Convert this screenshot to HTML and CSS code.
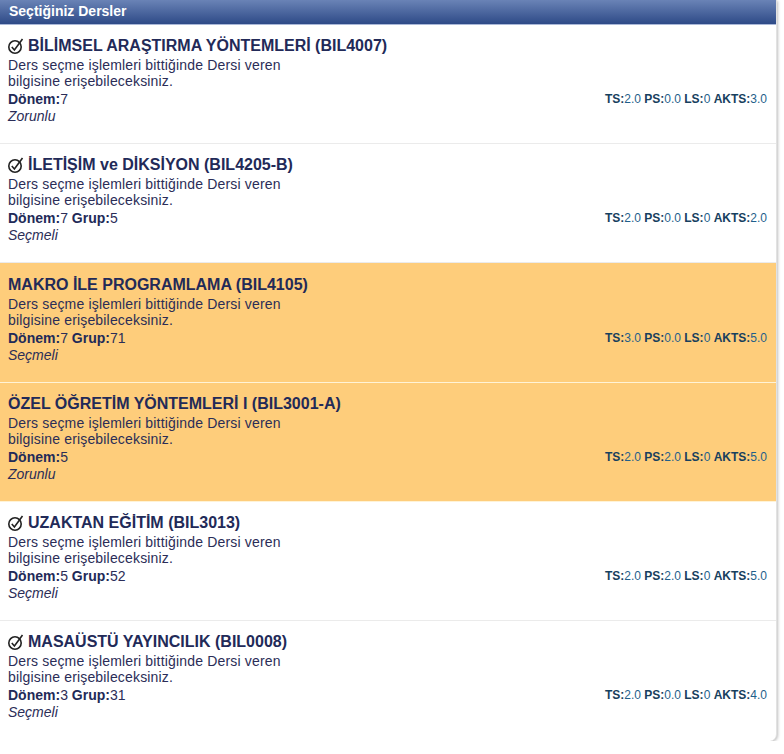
FILE: index.html
```html
<!DOCTYPE html>
<html lang="tr">
<head>
<meta charset="utf-8">
<title>Seçtiğiniz Dersler</title>
<link rel="stylesheet" href="styles.css">
</head>
<body>
<div class="panel">
  <div class="panel-head">Seçtiğiniz Dersler</div>
  <ul class="list">
    <li class="item">
      <div class="title"><svg class="chk" viewBox="0 0 16 16"><circle cx="7" cy="9" r="6.2"/><path d="M3.8 9 L6.4 12 L14.5 1"/></svg>BİLİMSEL ARAŞTIRMA YÖNTEMLERİ (BIL4007)</div>
      <div class="desc">Ders seçme işlemleri bittiğinde Dersi veren<br>bilgisine erişebileceksiniz.</div>
      <div class="row"><span><b>Dönem:</b>7</span><span class="cr"><b>TS:</b>2.0 <b>PS:</b>0.0 <b>LS:</b>0 <b>AKTS:</b>3.0</span></div>
      <div class="type">Zorunlu</div>
    </li>
    <li class="item">
      <div class="title"><svg class="chk" viewBox="0 0 16 16"><circle cx="7" cy="9" r="6.2"/><path d="M3.8 9 L6.4 12 L14.5 1"/></svg>İLETİŞİM ve DİKSİYON (BIL4205-B)</div>
      <div class="desc">Ders seçme işlemleri bittiğinde Dersi veren<br>bilgisine erişebileceksiniz.</div>
      <div class="row"><span><b>Dönem:</b>7 <b>Grup:</b>5</span><span class="cr"><b>TS:</b>2.0 <b>PS:</b>0.0 <b>LS:</b>0 <b>AKTS:</b>2.0</span></div>
      <div class="type">Seçmeli</div>
    </li>
    <li class="item warn">
      <div class="title">MAKRO İLE PROGRAMLAMA (BIL4105)</div>
      <div class="desc">Ders seçme işlemleri bittiğinde Dersi veren<br>bilgisine erişebileceksiniz.</div>
      <div class="row"><span><b>Dönem:</b>7 <b>Grup:</b>71</span><span class="cr"><b>TS:</b>3.0 <b>PS:</b>0.0 <b>LS:</b>0 <b>AKTS:</b>5.0</span></div>
      <div class="type">Seçmeli</div>
    </li>
    <li class="item warn">
      <div class="title">ÖZEL ÖĞRETİM YÖNTEMLERİ I (BIL3001-A)</div>
      <div class="desc">Ders seçme işlemleri bittiğinde Dersi veren<br>bilgisine erişebileceksiniz.</div>
      <div class="row"><span><b>Dönem:</b>5</span><span class="cr"><b>TS:</b>2.0 <b>PS:</b>2.0 <b>LS:</b>0 <b>AKTS:</b>5.0</span></div>
      <div class="type">Zorunlu</div>
    </li>
    <li class="item">
      <div class="title"><svg class="chk" viewBox="0 0 16 16"><circle cx="7" cy="9" r="6.2"/><path d="M3.8 9 L6.4 12 L14.5 1"/></svg>UZAKTAN EĞİTİM (BIL3013)</div>
      <div class="desc">Ders seçme işlemleri bittiğinde Dersi veren<br>bilgisine erişebileceksiniz.</div>
      <div class="row"><span><b>Dönem:</b>5 <b>Grup:</b>52</span><span class="cr"><b>TS:</b>2.0 <b>PS:</b>2.0 <b>LS:</b>0 <b>AKTS:</b>5.0</span></div>
      <div class="type">Seçmeli</div>
    </li>
    <li class="item">
      <div class="title"><svg class="chk" viewBox="0 0 16 16"><circle cx="7" cy="9" r="6.2"/><path d="M3.8 9 L6.4 12 L14.5 1"/></svg>MASAÜSTÜ YAYINCILIK (BIL0008)</div>
      <div class="desc">Ders seçme işlemleri bittiğinde Dersi veren<br>bilgisine erişebileceksiniz.</div>
      <div class="row"><span><b>Dönem:</b>3 <b>Grup:</b>31</span><span class="cr"><b>TS:</b>2.0 <b>PS:</b>0.0 <b>LS:</b>0 <b>AKTS:</b>4.0</span></div>
      <div class="type">Seçmeli</div>
    </li>
  </ul>
</div>
</body>
</html>
```
FILE: styles.css
```css
html, body {
  margin: 0;
  padding: 0;
  background: #fff;
}
body {
  font-family: "Liberation Sans", Arial, sans-serif;
  color: #2b2d57;
}
.panel {
  width: 777px;
  background: #fff;
  border-radius: 0 0 7px 0;
  box-shadow: 1px 1px 3px rgba(0,0,0,0.25);
  border-right: 1px solid #e2e2e2;
  box-sizing: border-box;
  padding-bottom: 2px;
}
.panel-head {
  height: 24px;
  border-bottom: 1px solid #aab8d8;
  background: linear-gradient(#6a83b6, #2e4a87);
  color: #fff;
  font-weight: bold;
  font-size: 14px;
  line-height: 23px;
  padding-left: 9px;
}
.list {
  list-style: none;
  margin: 0;
  padding: 0;
}
.item {
  padding: 11px 9px 18px 8px;
  border-bottom: 1px solid #ebebeb;
  height: 89px;
}
.item:nth-child(3) {
  padding-top: 12px;
}
.item:last-child {
  border-bottom: none;
}
.item.warn {
  background: #fecd7b;
  border-bottom-color: #fff3d6;
}
.title {
  font-size: 16px;
  font-weight: bold;
  line-height: 20px;
  color: #222a58;
  display: flex;
  align-items: center;
  margin-bottom: 1px;
}
.chk {
  width: 16px;
  height: 16px;
  margin-right: 4px;
  fill: none;
  stroke: #222;
  stroke-width: 1.6;
}
.desc {
  font-size: 14px;
  line-height: 16px;
  letter-spacing: 0.17px;
  color: #2b2d57;
}
.row {
  display: flex;
  justify-content: space-between;
  align-items: center;
  font-size: 14px;
  line-height: 17px;
  margin-top: 2px;
}
.row b {
  color: #222a58;
}
.cr {
  font-size: 12px;
  color: #1f5f8b;
}
.cr b {
  color: #17405e;
}
.type {
  font-style: italic;
  font-size: 14px;
  line-height: 17px;
}
```
